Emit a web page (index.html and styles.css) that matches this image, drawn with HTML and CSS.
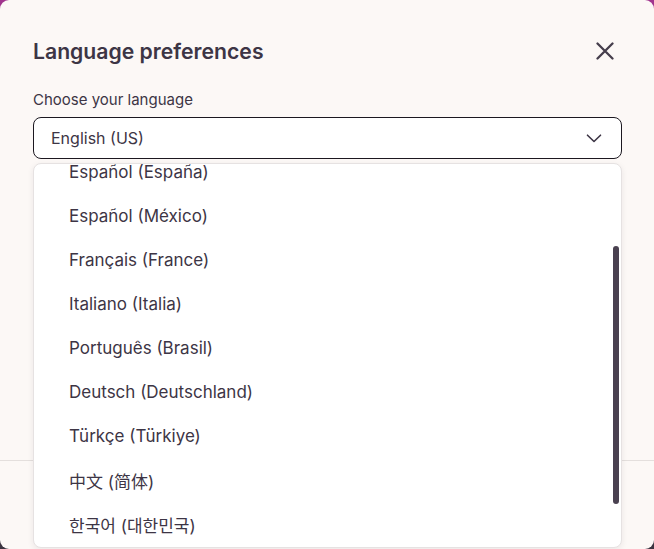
FILE: index.html
```html
<!DOCTYPE html>
<html lang="en">
<head>
<meta charset="utf-8">
<title>Language preferences</title>
<link rel="stylesheet" href="styles.css">
</head>
<body>
  <div class="modal" role="dialog" aria-labelledby="lp-title">
    <header class="modal-header">
      <h2 id="lp-title" class="modal-title">Language preferences</h2>
      <button class="close-btn" aria-label="Close">
        <svg width="18" height="18" viewBox="0 0 18 18" fill="none">
          <path d="M1.5 1.5 L16.5 16.5 M16.5 1.5 L1.5 16.5" stroke="currentColor" stroke-width="2.3" stroke-linecap="round"/>
        </svg>
      </button>
    </header>

    <div class="modal-body">
      <label class="field-label">Choose your language</label>
      <div class="select-wrap">
        <button class="select">
          <span>English (US)</span>
          <svg class="chevron" width="16" height="9" viewBox="0 0 16 9" fill="none">
            <path d="M1.5 1.2 L8 7.5 L14.5 1.2" stroke="currentColor" stroke-width="1.6" stroke-linecap="round" stroke-linejoin="round"/>
          </svg>
        </button>

        <div class="dropdown">
          <ul class="options">
            <li>Español (España)</li>
            <li>Español (México)</li>
            <li>Français (France)</li>
            <li>Italiano (Italia)</li>
            <li>Português (Brasil)</li>
            <li>Deutsch (Deutschland)</li>
            <li>Türkçe (Türkiye)</li>
            <li lang="zh-CN">中文 (简体)</li>
            <li lang="ko">한국어 (대한민국)</li>
          </ul>
          <div class="scroll-thumb"></div>
        </div>
      </div>
    </div>

    <footer class="modal-footer"></footer>
  </div>
</body>
</html>
```

FILE: styles.css
```css
* {
  box-sizing: border-box;
}

html, body {
  margin: 0;
  height: 100%;
}

body {
  background: linear-gradient(180deg, #a1348e 0%, #6b3a66 50%, #3b3440 100%);
  font-family: Inter, "Noto Sans", "Noto Sans CJK KR", sans-serif;
  color: #3d3545;
  overflow: hidden;
}

.modal {
  width: 654px;
  height: 549px;
  background: #fcf8f6;
  border-radius: 9px;
  display: flex;
  flex-direction: column;
}

.modal-header {
  display: flex;
  align-items: center;
  justify-content: space-between;
  padding: 37px 40px 0 33px;
}

.modal-title {
  margin: 0;
  font-size: 21.2px;
  line-height: 28px;
  font-weight: 600;
  color: #3d3545;
}

.close-btn {
  border: 0;
  background: none;
  padding: 0;
  width: 18px;
  height: 18px;
  color: #463e4c;
  display: flex;
}

.modal-body {
  flex: 1;
  padding: 25px 32px 0 33px;
}

.field-label {
  display: block;
  font-size: 15px;
  line-height: 20px;
  color: #3d3545;
  margin-bottom: 7px;
}

.select-wrap {
  position: relative;
}

.select {
  width: 589px;
  height: 42px;
  border: 1px solid #1c1820;
  border-radius: 8px;
  background: #ffffff;
  display: flex;
  align-items: center;
  justify-content: space-between;
  padding: 0 19px 0 17px;
  font-family: inherit;
  font-size: 16px;
  color: #3d3545;
}

.chevron {
  color: #3d3545;
  margin-top: 1px;
}

/* open listbox, layered over the rest of the dialog */
.dropdown {
  position: absolute;
  top: 46px;
  left: 0;
  width: 589px;
  height: 385px;
  background: #ffffff;
  border: 1px solid #e6e2e2;
  border-radius: 8px;
  box-shadow: 0 2px 6px rgba(40, 30, 40, 0.08);
  overflow: hidden;
  z-index: 2;
}

.options {
  list-style: none;
  margin: -14px 0 0;
  padding: 0;
}

.options li {
  height: 44px;
  display: flex;
  align-items: center;
  padding-left: 35px;
  font-size: 17px;
  color: #3d3545;
}

.scroll-thumb {
  position: absolute;
  right: 2px;
  top: 82px;
  width: 6px;
  height: 258px;
  border-radius: 3px;
  background: #4a4150;
}

.modal-footer {
  height: 89px;
  border-top: 1px solid #e4dfdd;
}
```
